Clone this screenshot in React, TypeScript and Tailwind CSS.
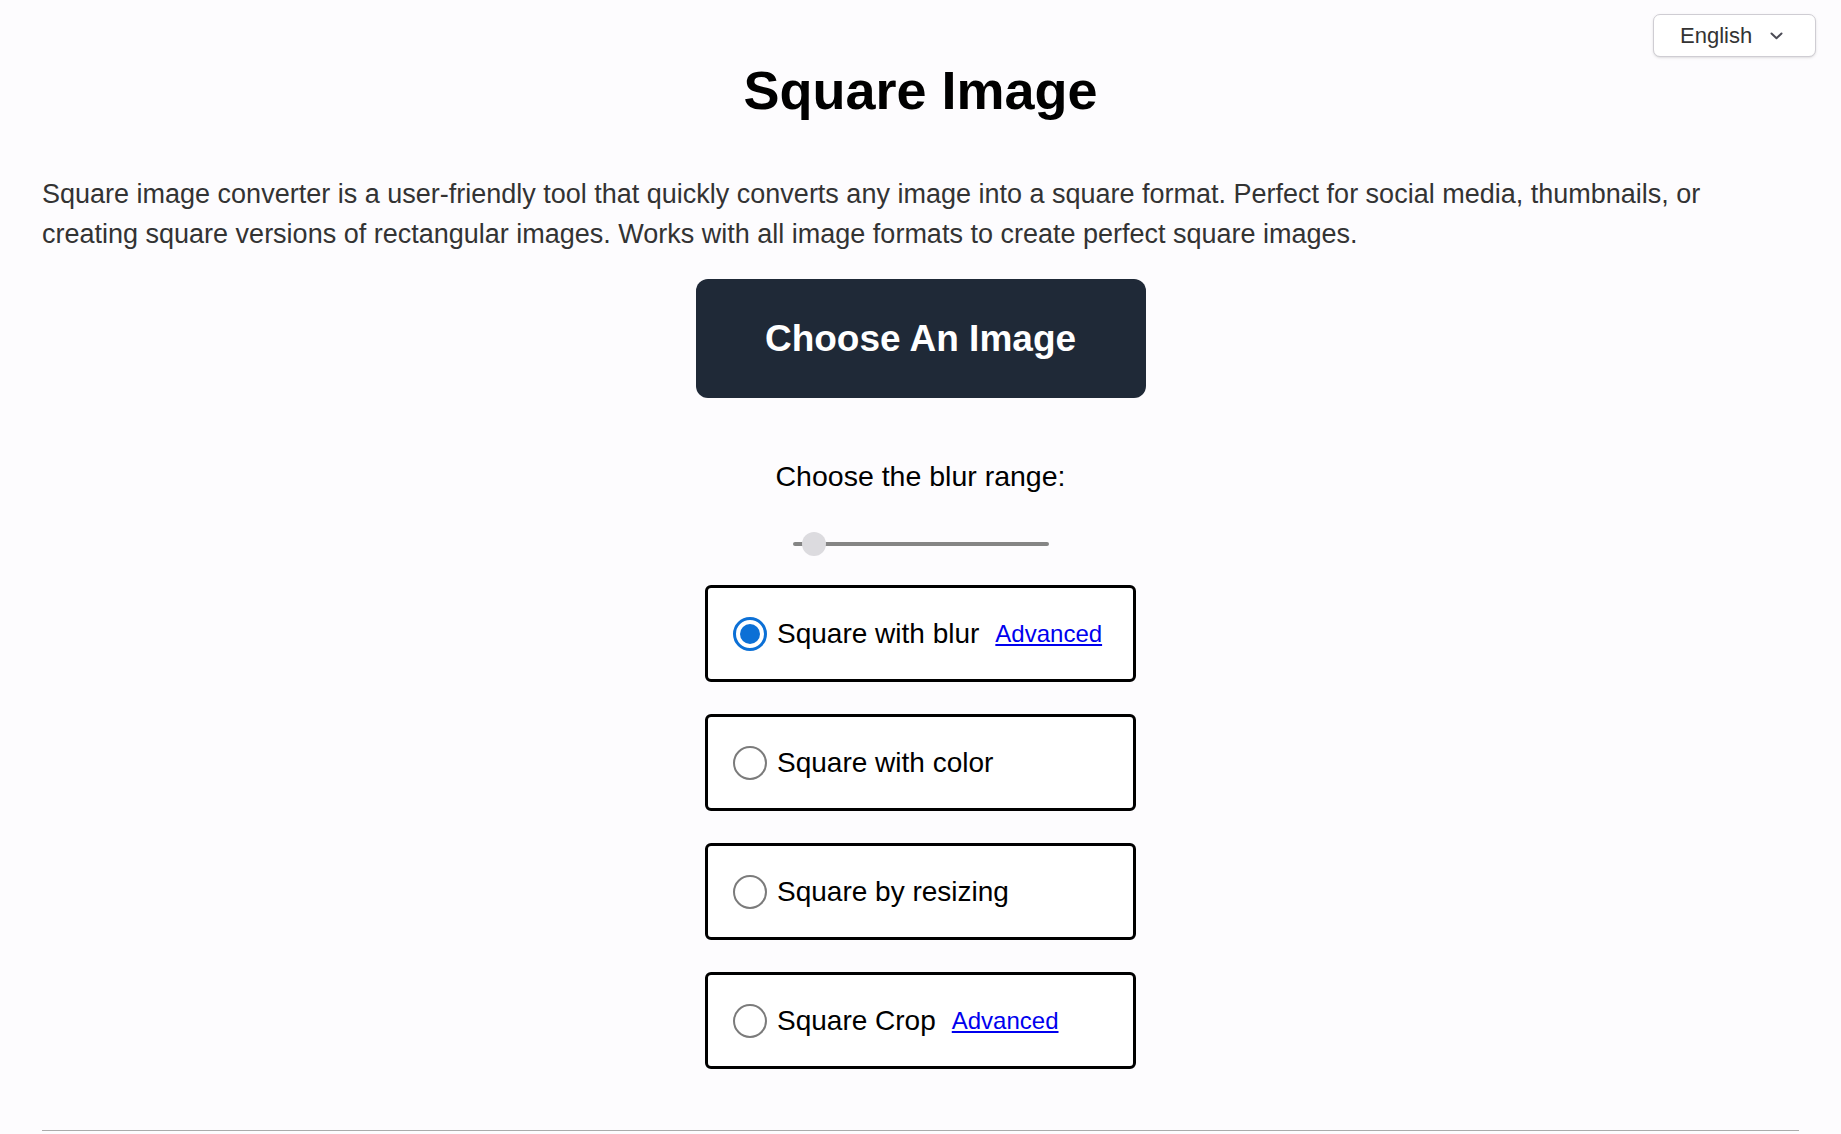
import { useState } from 'react'

interface SquareOption {
  id: string
  label: string
  hasAdvanced: boolean
}

const OPTIONS: SquareOption[] = [
  { id: 'blur', label: 'Square with blur', hasAdvanced: true },
  { id: 'color', label: 'Square with color', hasAdvanced: false },
  { id: 'resize', label: 'Square by resizing', hasAdvanced: false },
  { id: 'crop', label: 'Square Crop', hasAdvanced: true },
]

function RadioDot({ checked }: { checked: boolean }) {
  if (checked) {
    return (
      <span className="flex h-[34px] w-[34px] shrink-0 items-center justify-center rounded-full border-[3px] border-[#0c70d6] bg-white">
        <span className="h-[20px] w-[20px] rounded-full bg-[#0c70d6]" />
      </span>
    )
  }
  return <span className="h-[34px] w-[34px] shrink-0 rounded-full border-[2.5px] border-[#7b7b7b] bg-white" />
}

function OptionBox({
  option,
  checked,
  onSelect,
}: {
  option: SquareOption
  checked: boolean
  onSelect: () => void
}) {
  return (
    <div
      onClick={onSelect}
      className="flex h-[97px] w-[431px] cursor-pointer items-center rounded-[6px] border-[3px] border-black bg-white pl-[25px]"
    >
      <RadioDot checked={checked} />
      <span className="ml-[10px] text-[28px] leading-[32px] text-black">{option.label}</span>
      {option.hasAdvanced ? (
        <a href="#" className="ml-[16px] text-[24px] leading-[28px] text-[#0000ee] underline">
          Advanced
        </a>
      ) : null}
    </div>
  )
}

function LanguageSelect() {
  return (
    <div className="absolute right-[25px] top-[14px] flex h-[43px] w-[163px] items-center rounded-[7px] border border-[#cfcdd3] bg-white pl-[26px] shadow-sm">
      <span className="text-[22px] leading-[26px] text-[#333]">English</span>
      <svg className="ml-[18px]" width="13" height="8" viewBox="0 0 13 8" fill="none">
        <path d="M1.5 1.5L6.5 6.2L11.5 1.5" stroke="#4b4b55" strokeWidth="2" strokeLinecap="round" strokeLinejoin="round" />
      </svg>
    </div>
  )
}

export default function App() {
  const [selected, setSelected] = useState('blur')

  return (
    <div
      className="relative min-h-[1134px] bg-[#fdfcfe] px-[42px]"
      style={{ fontFamily: '"Liberation Sans", Arial, sans-serif' }}
    >
      <LanguageSelect />

      <h1 className="pt-[59px] text-center text-[54px] font-bold leading-[62px] text-black">Square Image</h1>

      <p className="mt-[53px] text-[27px] leading-[40px] text-[#333]">
        Square image converter is a user-friendly tool that quickly converts any image into a square format. Perfect for
        social media, thumbnails, or creating square versions of rectangular images. Works with all image formats to
        create perfect square images.
      </p>

      <div className="flex flex-col items-center">
        <button
          type="button"
          className="mt-[25px] h-[119px] w-[450px] rounded-[12px] bg-[#1f2937] text-[37px] font-bold text-white"
        >
          Choose An Image
        </button>

        <p className="mt-[62px] text-[28.5px] leading-[32px] text-black">Choose the blur range:</p>

        <div className="relative mt-[40px] flex h-[24px] w-[256px] items-center">
          <div className="h-[4px] w-full rounded-full bg-[#858585]" />
          <div className="absolute left-[9px] top-0 h-[24px] w-[24px] rounded-full bg-[#dcdbdf]" />
        </div>

        <div className="mt-[29px] flex flex-col gap-[32px]">
          {OPTIONS.map((option) => (
            <OptionBox
              key={option.id}
              option={option}
              checked={selected === option.id}
              onSelect={() => setSelected(option.id)}
            />
          ))}
        </div>
      </div>

      <div className="mt-[61px] h-px bg-[#ababab]" />
    </div>
  )
}
